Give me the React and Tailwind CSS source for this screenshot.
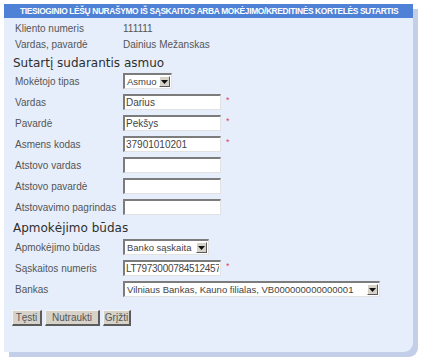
const sans = "font-['Liberation_Sans',Arial,sans-serif]"

const Star = () => <span className="ml-[5px] -mt-[4px] text-[9px] leading-none text-[#e0406a]">*</span>

const Field = ({ value = '', width = 'w-[98px]', tight = false }) => (
  <input
    readOnly
    value={value}
    className={`h-4 ${width} ${tight ? 'tracking-[-0.3px]' : ''} bg-white px-[1px] text-[10px] leading-[12px] text-[#444] outline-none border-t-2 border-l-2 border-t-[#7c7c7c] border-l-[#7c7c7c] border-r border-b border-r-[#e2e2e2] border-b-[#e2e2e2]`}
  />
)

const Select = ({ value, width }) => (
  <div className={`h-4 ${width} flex items-center bg-white border-t-2 border-l-2 border-t-[#7c7c7c] border-l-[#7c7c7c] border-r border-b border-r-[#e2e2e2] border-b-[#e2e2e2]`}>
    <span className="flex-1 pl-[2px] text-[9.5px] leading-[12px] text-[#444] whitespace-nowrap overflow-hidden">{value}</span>
    <span className="w-[11px] h-[11px] mr-[1px] flex items-center justify-center bg-[#d6d2ca] border border-t-white border-l-white border-r-[#5a5a5a] border-b-[#5a5a5a]">
      <svg width="7" height="4" viewBox="0 0 7 4"><path d="M0 0h7L3.5 4z" fill="#111" /></svg>
    </span>
  </div>
)

const Row = ({ label, children }) => (
  <div className="flex items-center h-4">
    <span className="w-[108px] shrink-0 text-[10px] text-[#555]">{label}</span>
    {children}
  </div>
)

const Btn = ({ children, width }) => (
  <button className={`h-4 ${width} bg-[#d6d2ca] text-[10px] leading-none text-[#555] border border-t-[#f4f4f4] border-l-[#f4f4f4] border-r-2 border-b-2 border-r-[#5c5c5c] border-b-[#5c5c5c]`}>
    {children}
  </button>
)

export default function App() {
  return (
    <div className={`w-[424px] h-[363px] bg-white pt-[4px] pl-[4px] ${sans}`}>
      <div className="w-[409px] h-[348px] bg-[#e6eefc] rounded-br-[9px] shadow-[5px_5px_0_#c3cfe8]">
        <div className="h-[14px] bg-[#4f82d6] pl-[16px] flex items-center overflow-hidden">
          <span className="text-[8.4px] font-bold tracking-[-0.35px] text-white whitespace-nowrap">
            TIESIOGINIO LĖŠŲ NURAŠYMO IŠ SĄSKAITOS ARBA MOKĖJIMO/KREDITINĖS KORTELĖS SUTARTIS
          </span>
        </div>

        <div className="pl-[11px]">
          <div className="flex items-center h-4 mt-[2px] text-[10px] text-[#555]">
            <span className="w-[108px]">Kliento numeris</span>
            <span>111111</span>
          </div>
          <div className="flex items-center h-4 text-[10px] text-[#555]">
            <span className="w-[108px]">Vardas, pavardė</span>
            <span>Dainius Mežanskas</span>
          </div>

          <h2 className="h-[21px] flex items-center -ml-[2px] font-['DejaVu_Sans',Verdana,sans-serif] text-[12px] text-[#2e2e2e]">
            Sutartį sudarantis asmuo
          </h2>

          <div className="flex flex-col gap-[5px]">
            <Row label="Mokėtojo tipas"><Select value="Asmuo" width="w-[49px]" /></Row>
            <Row label="Vardas"><Field value="Darius" /><Star /></Row>
            <Row label="Pavardė"><Field value="Pekšys" /><Star /></Row>
            <Row label="Asmens kodas"><Field value="37901010201" /><Star /></Row>
            <Row label="Atstovo vardas"><Field /></Row>
            <Row label="Atstovo pavardė"><Field /></Row>
            <Row label="Atstovavimo pagrindas"><Field /></Row>
          </div>

          <h2 className="h-[23px] mt-[1px] flex items-center -ml-[2px] font-['DejaVu_Sans',Verdana,sans-serif] text-[12px] text-[#2e2e2e]">
            Apmokėjimo būdas
          </h2>

          <div className="flex flex-col gap-[5px]">
            <Row label="Apmokėjimo būdas"><Select value="Banko sąskaita" width="w-[86px]" /></Row>
            <Row label="Sąskaitos numeris"><Field value="LT7973000784512457" tight /><Star /></Row>
            <Row label="Bankas"><Select value="Vilniaus Bankas, Kauno filialas, VB000000000000001" width="w-[257px]" /></Row>
          </div>

          <div className="flex gap-[3px] mt-[13px] -ml-[3px]">
            <Btn width="w-[30px]">Tęsti</Btn>
            <Btn width="w-[55px]">Nutraukti</Btn>
            <Btn width="w-[28px]">Grįžti</Btn>
          </div>
        </div>
      </div>
    </div>
  )
}
